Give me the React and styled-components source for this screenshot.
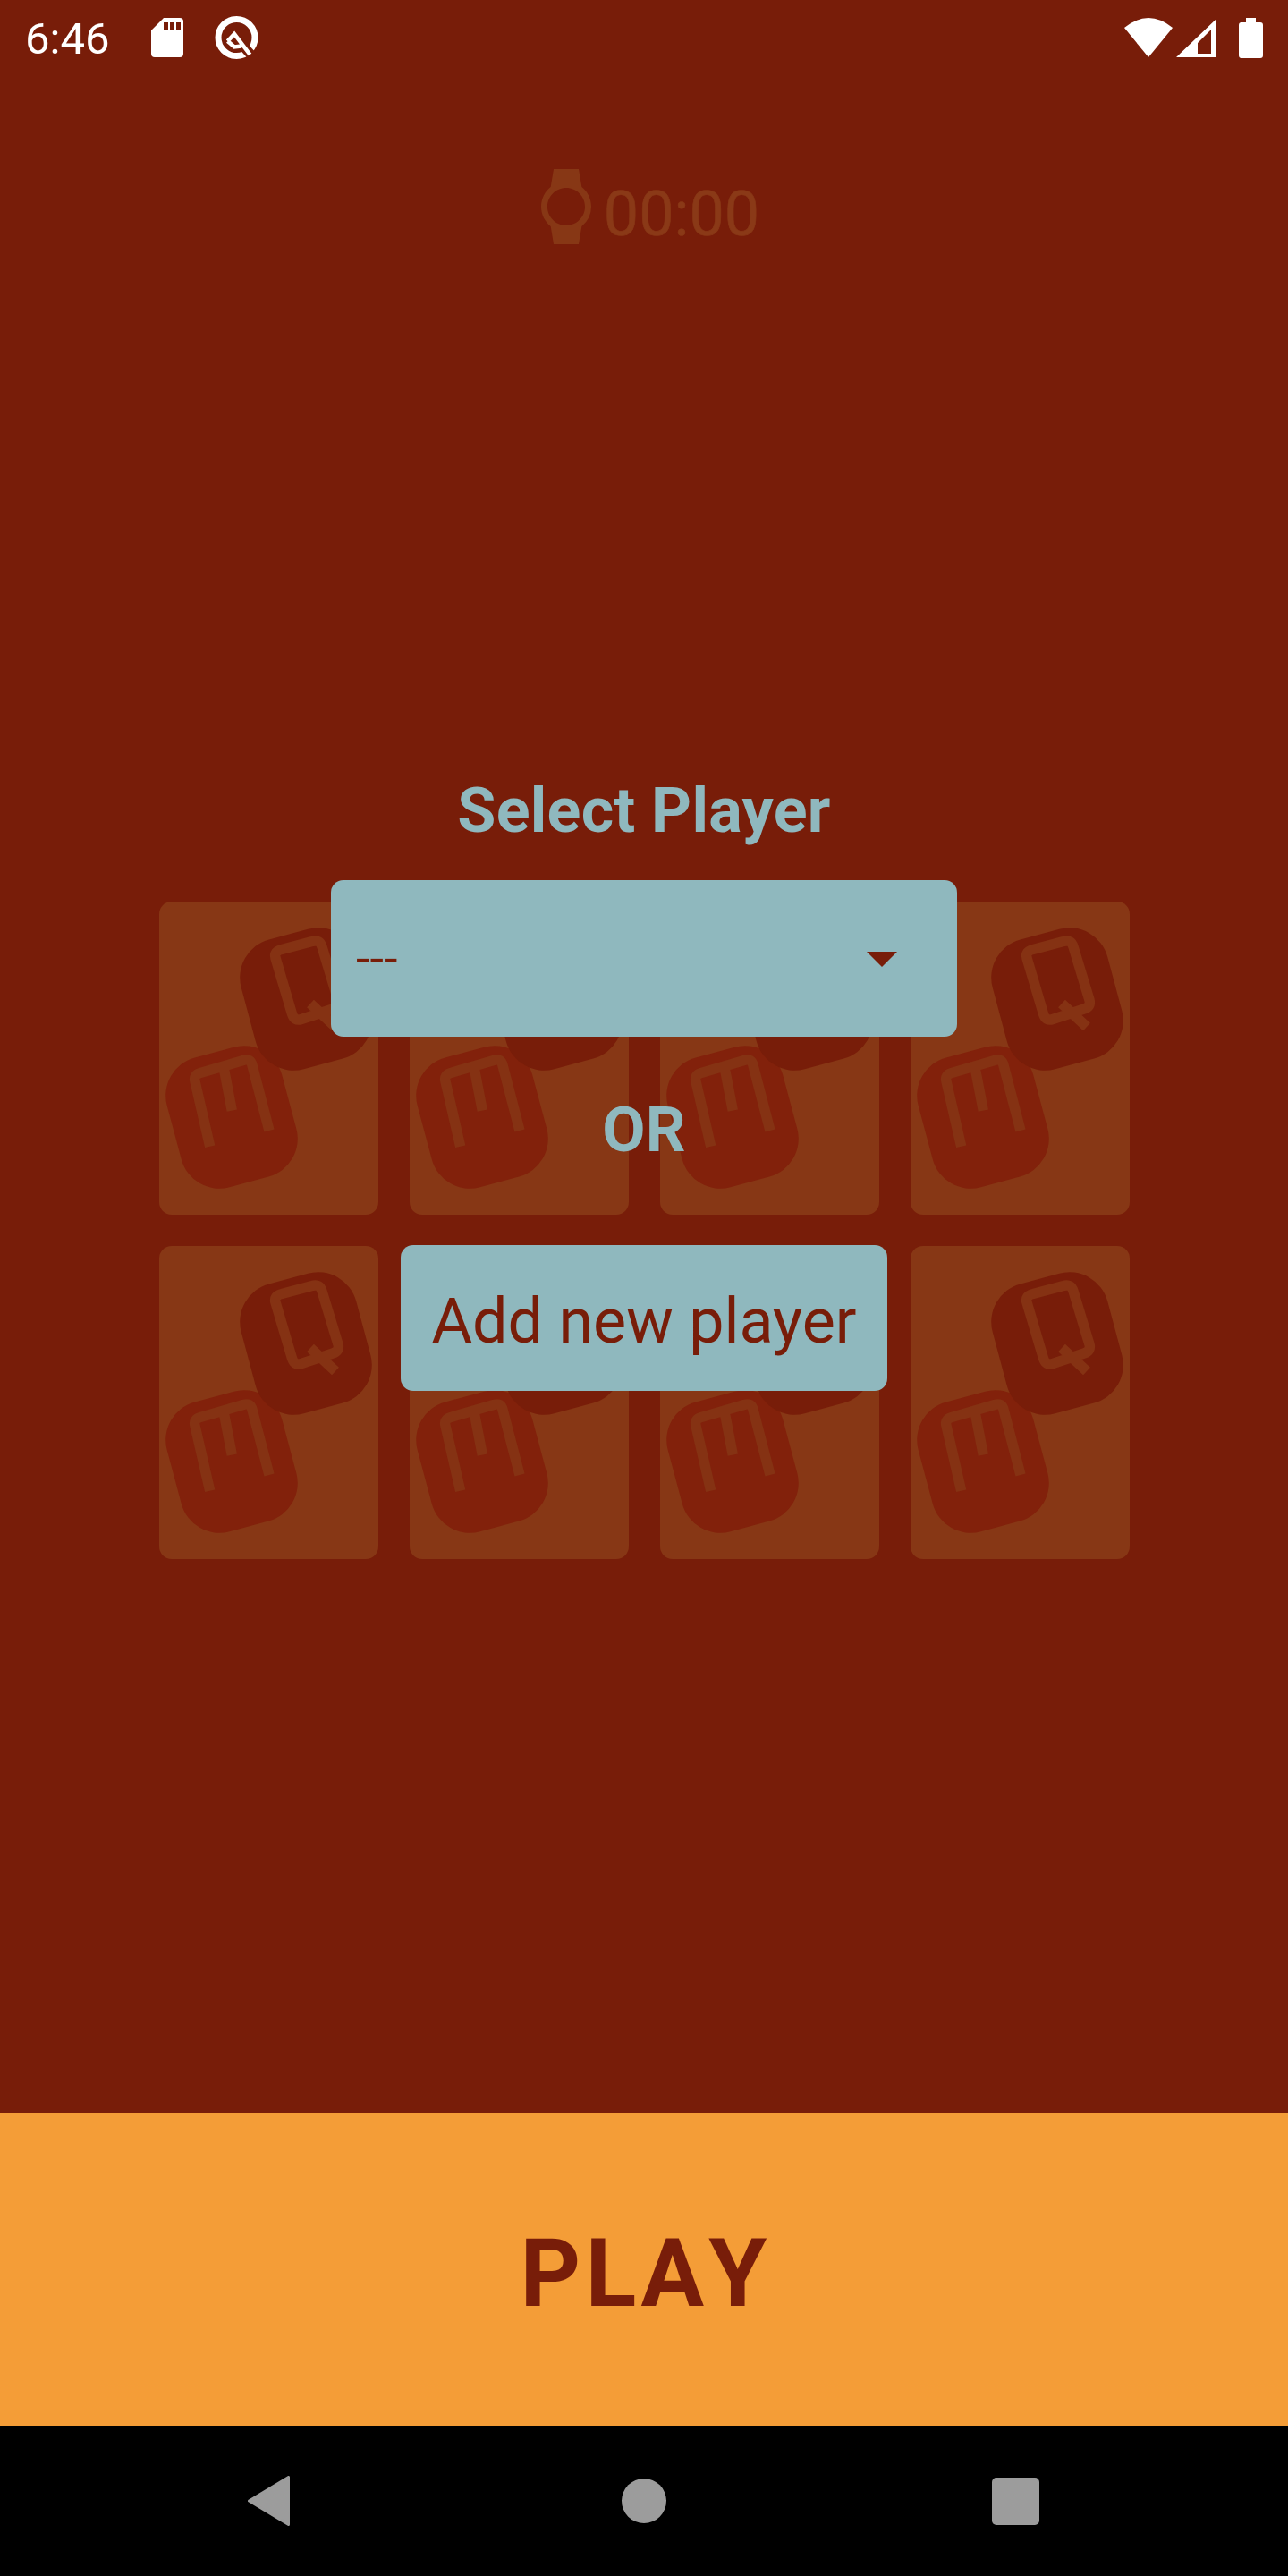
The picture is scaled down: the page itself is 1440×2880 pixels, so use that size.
import React from "react";
import styled, { createGlobalStyle } from "styled-components";
import { MdWatch } from "react-icons/md";

const BG = "#781d09";
const CARD = "#873715";
const LETTER = "#853213";
const TEAL = "#8fb8be";

const Global = createGlobalStyle`
  html, body { margin: 0; padding: 0; background: ${BG}; }
  * { box-sizing: border-box; }
`;

const Screen = styled.div`
  width: 1440px;
  height: 2880px;
  display: flex;
  flex-direction: column;
  background: ${BG};
  font-family: Roboto, "Liberation Sans", sans-serif;
  overflow: hidden;
`;

const StatusBar = styled.header`
  height: 84px;
  flex: none;
  display: flex;
  align-items: center;
  justify-content: space-between;
  color: #fff;
`;

const StatusLeft = styled.div`
  display: flex;
  align-items: center;
  padding-left: 28px;
`;

const Clock = styled.span`
  font-size: 49px;
  line-height: 58px;
  width: 141px;
  padding-top: 4px;
`;

const StatusRight = styled.div`
  display: flex;
  align-items: center;
  padding-right: 28px;
`;

const StatusIcon = styled.svg`
  display: block;
  flex: none;
  margin-left: ${(p) => p.$ml || 0}px;
`;

const Main = styled.main`
  flex: 1;
  position: relative;
  display: flex;
  flex-direction: column;
  align-items: center;
  padding-top: 105px;
`;

const Timer = styled.div`
  display: flex;
  align-items: flex-start;
  color: #8a3917;
  height: 91px;
  svg { display: block; color: ${CARD}; }
`;

const TimerText = styled.span`
  font-size: 70px;
  line-height: 82px;
  margin-top: 9px;
  -webkit-text-stroke: 0.6px #8a3917;
`;

const Board = styled.section`
  display: grid;
  grid-template-columns: repeat(4, 245px);
  grid-auto-rows: 350px;
  gap: 35px;
  margin-top: 728px;
`;

const Card = styled.div`
  background: ${CARD};
  border-radius: 14px;
  svg { display: block; }
`;

const Overlay = styled.div`
  position: absolute;
  inset: 0;
  display: flex;
  flex-direction: column;
  align-items: center;
  padding-top: 781px;
`;

const Heading = styled.div`
  font-size: 70px;
  line-height: 82px;
  font-weight: 700;
  letter-spacing: 0.3px;
  color: ${TEAL};
`;

const Dropdown = styled.div`
  width: 700px;
  height: 175px;
  margin-top: 37px;
  padding: 0 67px 0 28px;
  display: flex;
  align-items: center;
  justify-content: space-between;
  background: ${TEAL};
  border-radius: 14px;
  color: ${BG};
  font-size: 56px;
`;

const Caret = styled.span`
  width: 0;
  height: 0;
  margin-top: 1px;
  border-left: 17px solid transparent;
  border-right: 17px solid transparent;
  border-top: 17px solid ${BG};
`;

const OrLabel = styled(Heading)`
  margin-top: 63px;
`;

const AddButton = styled.button`
  width: 544px;
  height: 163px;
  margin-top: 88px;
  border: 0;
  padding: 6px 0 0;
  background: ${TEAL};
  border-radius: 14px;
  color: ${BG};
  font: 400 70px/82px Roboto, "Liberation Sans", sans-serif;
`;

const PlayButton = styled.button`
  flex: none;
  height: 350px;
  width: 100%;
  border: 0;
  padding: 10px 0 0 4px;
  background: #f49d37;
  color: ${BG};
  font: 700 105px/123px Roboto, "Liberation Sans", sans-serif;
  font-kerning: none;
  letter-spacing: 5.25px;
`;

const NavBar = styled.nav`
  flex: none;
  height: 168px;
  background: #000;
  display: grid;
  grid-template-columns: 277px 47px 371px 50px 364px 53px;
  align-items: center;
`;

const NavBack = styled.svg`
  display: block;
  grid-column: 2;
`;

const NavHome = styled.span`
  grid-column: 4;
  width: 50px;
  height: 50px;
  border-radius: 50%;
  background: #9c9c9c;
`;

const NavRecents = styled.span`
  grid-column: 6;
  width: 53px;
  height: 53px;
  border-radius: 5px;
  background: #9c9c9c;
`;

const CardBack = () => (
  <svg width="245" height="350" viewBox="0 0 245 350" fill="none">
    <rect x="14.5" y="166" width="133" height="150" rx="44" fill="#82210b" transform="rotate(-15 81 241)" />
    <path d="M56.7 273.7L40 201Q38 193.7 46 191.5L94 177.5Q102 175 104 183L123 256M72 185L81.3 233.7" stroke={LETTER} strokeWidth="11.5" strokeLinejoin="round" />
    <rect x="97.5" y="34" width="133" height="150" rx="44" fill={BG} transform="rotate(-15 164 109)" />
    <path d="M137 53.5L171 44.5Q179.5 42 182 50.5L200 110Q202 117.5 194 120L159 131.5Q151 134 148.5 125.5L130 63Q128 55.5 137 53.5ZM169 114L197 140" stroke={LETTER} strokeWidth="11.5" strokeLinejoin="round" />
  </svg>
);

export default function App() {
  return (
    <Screen>
      <Global />
      <StatusBar>
        <StatusLeft>
          <Clock>6:46</Clock>
          <StatusIcon width="36" height="44" viewBox="0 0 36 44">
            <path
              fillRule="evenodd"
              fill="#fff"
              d="M14 0H32a4 4 0 0 1 4 4V40a4 4 0 0 1-4 4H4a4 4 0 0 1-4-4V14ZM14 5v8h5V5ZM21 5v8h5V5ZM28 5v8h5V5Z"
            />
          </StatusIcon>
          <StatusIcon width="50" height="50" viewBox="0 0 50 50" $ml="35">
            <circle cx="24.5" cy="25" r="20.5" fill="none" stroke="#fff" strokeWidth="7" />
            <path d="M25 27L46 50" stroke={BG} strokeWidth="11" />
            <path d="M14.5 29L22 21L39.5 44M14.5 29L22 35.5L30 34.5" fill="none" stroke="#fff" strokeWidth="4.5" />
          </StatusIcon>
        </StatusLeft>
        <StatusRight>
          <StatusIcon width="54" height="44" viewBox="0 0 54 44">
            <path d="M0 11Q27-11 54 11L27 44Z" fill="#fff" />
          </StatusIcon>
          <StatusIcon width="45" height="43" viewBox="0 0 45 43" $ml="4">
            <path fillRule="evenodd" fill="#fff" d="M0 43L45 0V43ZM24 39H39V12L24 27Z" />
          </StatusIcon>
          <StatusIcon width="27" height="45" viewBox="0 0 27 45" $ml="25">
            <path fill="#fff" d="M8 0H19V5H24a3 3 0 0 1 3 3V42a3 3 0 0 1-3 3H3a3 3 0 0 1-3-3V8a3 3 0 0 1 3-3H8Z" />
          </StatusIcon>
        </StatusRight>
      </StatusBar>
      <Main>
        <Timer>
          <MdWatch size={84} />
          <TimerText>00:00</TimerText>
        </Timer>
        <Board>
          {Array.from({ length: 8 }, (_, i) => (
            <Card key={i}>
              <CardBack />
            </Card>
          ))}
        </Board>
        <Overlay>
          <Heading>Select Player</Heading>
          <Dropdown>
            <span>---</span>
            <Caret />
          </Dropdown>
          <OrLabel>OR</OrLabel>
          <AddButton>Add new player</AddButton>
        </Overlay>
      </Main>
      <PlayButton>PLAY</PlayButton>
      <NavBar>
        <NavBack width="47" height="56" viewBox="0 0 47 56">
          <path d="M45.5 1.5V54.5L1.5 28Z" fill="#9c9c9c" stroke="#9c9c9c" strokeWidth="3" strokeLinejoin="round" />
        </NavBack>
        <NavHome />
        <NavRecents />
      </NavBar>
    </Screen>
  );
}
